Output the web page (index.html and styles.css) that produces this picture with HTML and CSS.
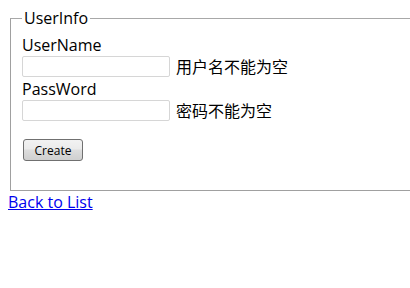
FILE: index.html
```html
<!DOCTYPE html>
<html lang="zh-CN">
<head>
    <meta charset="UTF-8">
    <title>Create</title>
    <link rel="stylesheet" href="styles.css">
</head>
<body>
    <form class="user-form">
        <fieldset class="user-info">
            <legend>UserInfo</legend>

            <div class="field-label">
                <label for="UserName">UserName</label>
            </div>
            <div class="field-row">
                <input type="text" id="UserName" class="text-box">
                <span class="field-error">用户名不能为空</span>
            </div>

            <div class="field-label">
                <label for="PassWord">PassWord</label>
            </div>
            <div class="field-row">
                <input type="password" id="PassWord" class="text-box">
                <span class="field-error">密码不能为空</span>
            </div>

            <p class="actions">
                <button type="submit" class="create-btn">Create</button>
            </p>
        </fieldset>
    </form>

    <div class="back-link">
        <a href="#">Back to List</a>
    </div>
</body>
</html>
```

FILE: styles.css
```css
body {
    margin: 8px 0 8px 8px;
    font-family: "Open Sans", "Noto Sans CJK SC", sans-serif;
    font-size: 16px;
    color: #000;
    background: #fff;
}

.user-info {
    margin: 0 0 0 2px;
    padding: 7px 11px 0;
    border: 1px solid #a0a0a0;
    border-right: none;
    border-top-color: #a8a8a8;
}

.user-info legend {
    padding: 0 2px;
    line-height: 20px;
}

.field-label {
    line-height: 20px;
    margin-top: 2px;
}

.user-info legend + .field-label {
    margin-top: 0;
}

.field-row {
    display: flex;
    align-items: center;
    gap: 6px;
    height: 21px;
    margin-top: 1px;
}

.text-box {
    width: 148px;
    height: 21px;
    box-sizing: border-box;
    margin: 0;
    border: 1px solid #d6d6d6;
    border-radius: 2px;
    padding: 1px 3px;
    font-size: 14px;
}

.field-error {
    line-height: 20px;
}

/* Botão */
.actions {
    margin: 18px 0 0;
    padding-bottom: 29px;
}

.create-btn {
    display: block;
    width: 60px;
    height: 22px;
    padding: 0;
    margin-left: 1px;
    font-family: "Open Sans", sans-serif;
    font-size: 12px;
    color: #000;
    border: 1px solid #707070;
    border-radius: 3px;
    background: linear-gradient(#f2f2f2 0%, #ebebeb 45%, #dddddd 50%, #cfcfcf 100%);
}

.back-link a {
    color: #0000ee;
    line-height: 18px;
}
```
